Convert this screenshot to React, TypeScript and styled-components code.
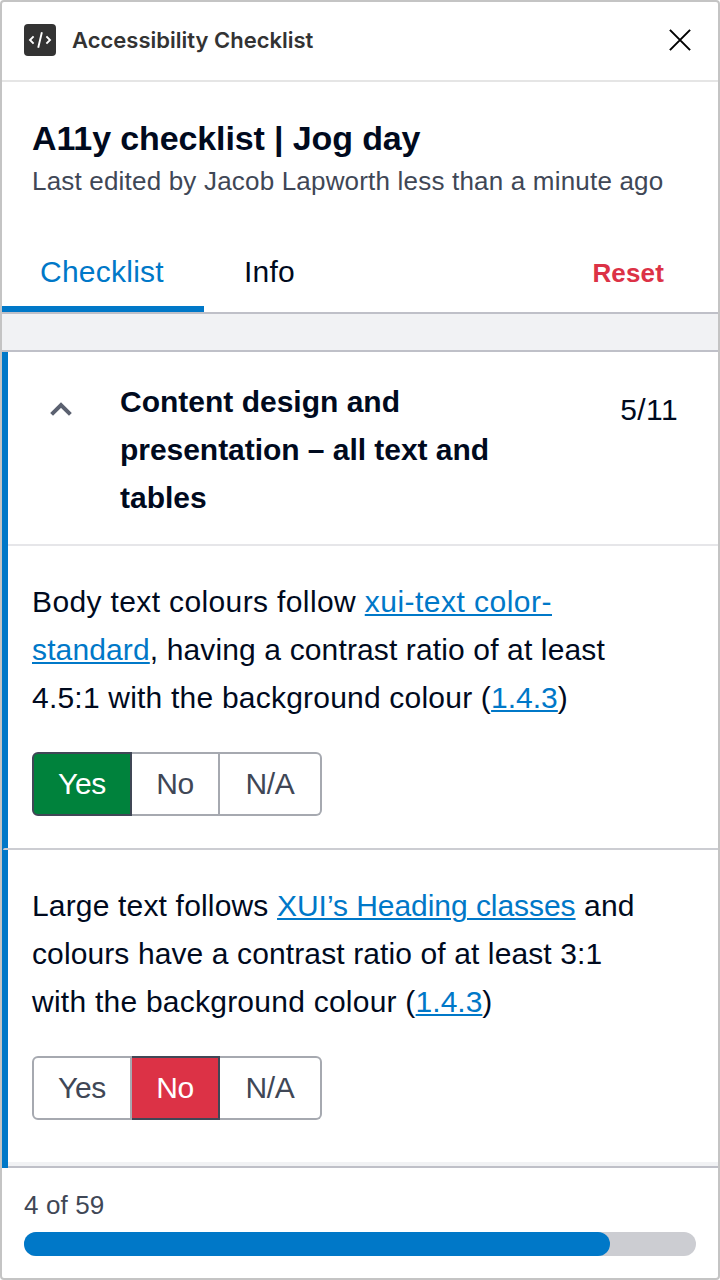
import React from "react";
import styled, { createGlobalStyle, css } from "styled-components";

const GlobalStyle = createGlobalStyle`
  *, *::before, *::after { box-sizing: border-box; }
  body {
    margin: 0;
    background: #fff;
    font-family: "Liberation Sans", Arial, sans-serif;
    color: #000a1e;
  }
  button { font: inherit; letter-spacing: inherit; color: inherit; background: none; border: 0; padding: 0; margin: 0; }
  h1, h2, p { margin: 0; }
`;

const Panel = styled.div`
  display: flex;
  flex-direction: column;
  width: 720px;
  height: 1280px;
  border: 2px solid #c4c4c4;
  border-radius: 4px;
  overflow: hidden;
  background: #fff;
`;

const WindowBar = styled.header`
  display: flex;
  align-items: center;
  flex: none;
  height: 80px;
  padding: 0 22px 2px;
  border-bottom: 2px solid #e5e5e5;
`;

const PluginIcon = styled.svg`
  width: 32px;
  height: 32px;
  margin-right: 16px;
`;

const PluginName = styled.span`
  flex: 1;
  font: 600 22px/32px Inter, sans-serif;
  color: #333;
`;

const CloseButton = styled.button`
  width: 32px;
  height: 32px;
  svg { display: block; }
`;

const Heading = styled.div`
  flex: none;
  height: 150px;
  padding: 36px 30px 0;
`;

const Title = styled.h1`
  font-size: 34px;
  font-weight: 700;
  line-height: 40px;
  letter-spacing: -0.12px;
`;

const Subtitle = styled.p`
  margin-top: 5px;
  font-size: 26px;
  line-height: 36px;
  letter-spacing: 0.19px;
  color: #404756;
  white-space: nowrap;
`;

const TabBar = styled.nav`
  display: flex;
  flex: none;
  height: 82px;
  border-bottom: 2px solid #bfc0c8;
`;

const Tab = styled.button<{ $active?: boolean }>`
  height: 80px;
  padding: 0 40px;
  font-size: 30px;
  line-height: 48px;
  letter-spacing: 0.25px;
  ${(p) =>
    p.$active &&
    css`
      width: 202px;
      padding: 0 0 0 38px;
      text-align: left;
      color: #0078c8;
      box-shadow: inset 0 -6px #0078c8;
    `}
`;

const ResetButton = styled.button`
  margin-left: auto;
  margin-right: 54px;
  padding-top: 2px;
  font-size: 26px;
  font-weight: 700;
  letter-spacing: 0.15px;
  color: #dc3246;
`;

const Gap = styled.div`
  flex: none;
  height: 38px;
  background: #f1f2f4;
  border-bottom: 2px solid #bfc0c8;
`;

const Section = styled.section`
  flex: none;
  height: 816px;
  border-left: 6px solid #0078c8;
  background: #f1f2f4;
`;

const SectionEnd = styled.div`
  height: 2px;
  margin-top: 4px;
  background: #bfc0c8;
`;

const SectionHeader = styled.div`
  display: flex;
  align-items: flex-start;
  height: 194px;
  padding: 26px 40px 0 40px;
  background: #fff;
  border-bottom: 2px solid #e6e6e9;
`;

const Chevron = styled.svg`
  flex: none;
  width: 26px;
  height: 16px;
  margin: 23px 46px 0 0;
`;

const SectionTitle = styled.h2`
  flex: 1;
  font-size: 30px;
  font-weight: 700;
  line-height: 48px;
`;

const Count = styled.span`
  margin-top: 8px;
  font-size: 30px;
  line-height: 48px;
  letter-spacing: 0.4px;
`;

const Question = styled.article<{ $height: number }>`
  height: ${(p) => p.$height}px;
  padding: 32px 24px 0;
  background: #fff;
`;

const Divider = styled.div`
  height: 2px;
  margin-left: -5px;
  border-top-left-radius: 2px;
  background: #cccdd2;
`;

const QuestionText = styled.p`
  font-size: 30px;
  line-height: 48px;
  white-space: nowrap;
`;

const Line = styled.span<{ $tracking: number }>`
  display: block;
  letter-spacing: ${(p) => p.$tracking}px;
`;

const Link = styled.a<{ $tracking?: number }>`
  letter-spacing: ${(p) => p.$tracking ?? 0}px;
  color: #0078c8;
  text-decoration: underline;
  text-decoration-thickness: 2px;
  text-underline-offset: 2px;
`;

const Options = styled.div`
  display: flex;
  margin-top: 30px;
`;

const Option = styled.button<{ $width: number; $fill?: string }>`
  width: ${(p) => p.$width}px;
  height: 64px;
  border: 2px solid #a6a9b0;
  border-left-width: 0;
  font-size: 30px;
  line-height: 60px;
  letter-spacing: -0.3px;
  text-align: center;
  color: #404756;
  &:first-child { border-left-width: 2px; border-radius: 6px 0 0 6px; }
  &:last-child { border-radius: 0 6px 6px 0; }
  ${(p) =>
    p.$fill &&
    css`
      background: ${p.$fill};
      border-color: #404756;
      color: #fff;
    `}
`;

const Footer = styled.footer`
  flex: 1;
  padding: 19px 22px 0;
`;

const Progress = styled.p`
  font-size: 26px;
  line-height: 36px;
  letter-spacing: 0.12px;
  color: #404756;
`;

const Track = styled.div`
  height: 24px;
  margin-top: 9px;
  border-radius: 12px;
  background: #cccdd2;
`;

const Fill = styled.div`
  width: 586px;
  height: 24px;
  border-radius: 12px;
  background: #0078c8;
`;

const fills: Record<string, string> = { Yes: "#00823c", No: "#dc3246", "N/A": "#404756" };

const options: { label: string; width: number }[] = [
  { label: "Yes", width: 100 },
  { label: "No", width: 88 },
  { label: "N/A", width: 102 },
];

function Answer({ value }: { value: string }) {
  return (
    <Options>
      {options.map(({ label, width }) => (
        <Option key={label} $width={width} $fill={label === value ? fills[label] : undefined}>
          {label}
        </Option>
      ))}
    </Options>
  );
}

export default function App() {
  return (
    <>
      <GlobalStyle />
      <Panel>
        <WindowBar>
          <PluginIcon viewBox="0 0 32 32" fill="none">
            <rect width="32" height="32" rx="4" fill="#333" />
            <path d="M9.6 12.4L6 16L9.6 19.6M22.4 12.4L26 16L22.4 19.6M17.9 8.2L14.2 23.8" stroke="#fff" strokeWidth="1.9" />
          </PluginIcon>
          <PluginName>Accessibility Checklist</PluginName>
          <CloseButton aria-label="Close">
            <svg width="32" height="32" viewBox="0 0 32 32" fill="none">
              <path d="M5.9 5.9L26.1 26.1M26.1 5.9L5.9 26.1" stroke="#000" strokeWidth="2" />
            </svg>
          </CloseButton>
        </WindowBar>
        <Heading>
          <Title>A11y checklist | Jog day</Title>
          <Subtitle>Last edited by Jacob Lapworth less than a minute ago</Subtitle>
        </Heading>
        <TabBar>
          <Tab $active>Checklist</Tab>
          <Tab>Info</Tab>
          <ResetButton>Reset</ResetButton>
        </TabBar>
        <Gap />
        <Section>
          <SectionHeader>
            <Chevron viewBox="0 0 26 16" fill="none">
              <path d="M3.6 13.4L13 4L22.4 13.4" stroke="#5b6170" strokeWidth="4" />
            </Chevron>
            <SectionTitle>
              <Line $tracking={0}>Content design and</Line>
              <Line $tracking={-0.04}>presentation – all text and</Line>
              <Line $tracking={0}>tables</Line>
            </SectionTitle>
            <Count>5/11</Count>
          </SectionHeader>
          <Question $height={302}>
            <QuestionText>
              <Line $tracking={0.37}>Body text colours follow <Link $tracking={0.48}>xui-text color-</Link></Line>
              <Line $tracking={0.13}><Link $tracking={0.13}>standard</Link>, having a contrast ratio of at least</Line>
              <Line $tracking={0.21}>4.5:1 with the background colour (<Link>1.4.3</Link>)</Line>
            </QuestionText>
            <Answer value="Yes" />
          </Question>
          <Divider />
          <Question $height={312}>
            <QuestionText>
              <Line $tracking={0.17}>Large text follows <Link $tracking={-0.05}>XUI’s Heading classes</Link> and</Line>
              <Line $tracking={0.11}>colours have a contrast ratio of at least 3:1</Line>
              <Line $tracking={0.24}>with the background colour (<Link>1.4.3</Link>)</Line>
            </QuestionText>
            <Answer value="No" />
          </Question>
          <SectionEnd />
        </Section>
        <Footer>
          <Progress>4 of 59</Progress>
          <Track><Fill /></Track>
        </Footer>
      </Panel>
    </>
  );
}
